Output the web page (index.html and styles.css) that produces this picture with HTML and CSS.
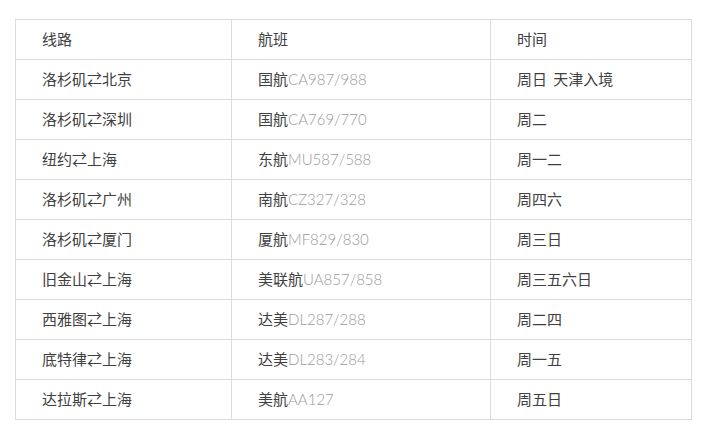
FILE: index.html
```html
<!DOCTYPE html>
<html lang="zh-CN">
<head>
<meta charset="utf-8">
<title>航线</title>
<link rel="stylesheet" href="styles.css">
</head>
<body>
<div class="wrap">
<table class="routes">
  <colgroup>
    <col class="c1"><col class="c2"><col class="c3">
  </colgroup>
  <tbody>
    <tr><td>线路</td><td>航班</td><td>时间</td></tr>
    <tr><td>洛杉矶⇄北京</td><td>国航<span class="code">CA987/988</span></td><td>周日 天津入境</td></tr>
    <tr><td>洛杉矶⇄深圳</td><td>国航<span class="code">CA769/770</span></td><td>周二</td></tr>
    <tr><td>纽约⇄上海</td><td>东航<span class="code">MU587/588</span></td><td>周一二</td></tr>
    <tr><td>洛杉矶⇄广州</td><td>南航<span class="code">CZ327/328</span></td><td>周四六</td></tr>
    <tr><td>洛杉矶⇄厦门</td><td>厦航<span class="code">MF829/830</span></td><td>周三日</td></tr>
    <tr><td>旧金山⇄上海</td><td>美联航<span class="code">UA857/858</span></td><td>周三五六日</td></tr>
    <tr><td>西雅图⇄上海</td><td>达美<span class="code">DL287/288</span></td><td>周二四</td></tr>
    <tr><td>底特律⇄上海</td><td>达美<span class="code">DL283/284</span></td><td>周一五</td></tr>
    <tr><td>达拉斯⇄上海</td><td>美航<span class="code">AA127</span></td><td>周五日</td></tr>
  </tbody>
</table>
</div>
</body>
</html>
```
FILE: styles.css
```css
html, body {
  margin: 0;
  padding: 0;
  background: #fff;
}
.wrap {
  padding: 19px 0 0 15px;
}
.routes {
  border-collapse: collapse;
  table-layout: fixed;
  width: 677px;
  font-family: "Noto Sans CJK SC", "Noto Sans", sans-serif;
  font-size: 15px;
  color: #404040;
}
.c1 { width: 216px; }
.c2 { width: 259px; }
.c3 { width: 201px; }
.routes td {
  border: 1px solid #dcdcdc;
  height: 40px;
  padding: 0 0 1px 26px;
  box-sizing: border-box;
  vertical-align: middle;
  line-height: 20px;
  white-space: nowrap;
  word-spacing: 3px;
}
.code {
  font-family: "Lato", "Roboto", sans-serif;
  font-weight: 300;
  color: #9a9a9a;
}
```
